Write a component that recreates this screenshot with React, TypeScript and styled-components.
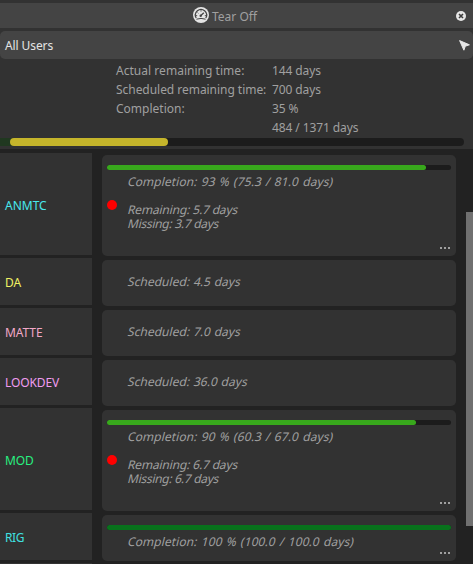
import React from 'react';
import styled, { createGlobalStyle } from 'styled-components';

const GlobalStyle = createGlobalStyle`
  * { box-sizing: border-box; }
  html, body { margin: 0; background: #323232; overflow: hidden; }
`;

const Panel = styled.div`
  width: 473px;
  height: 564px;
  padding-top: 3px;
  display: flex;
  flex-direction: column;
  overflow: hidden;
  background: #323232;
  color: #a0a0a0;
  font: 12px/19px 'Noto Sans', sans-serif;
  white-space: pre;
`;

const TitleBar = styled.header`
  height: 25px;
  flex: none;
  display: grid;
  grid-template-columns: 193px 1fr 10px;
  align-items: center;
  padding-right: 7px;
  background: #444;
`;

const TearOff = styled.button`
  grid-column: 2;
  display: flex;
  align-items: center;
  gap: 3px;
  padding: 0;
  border: 0;
  background: none;
  color: #a0a0a0;
  font: inherit;

  svg { margin-bottom: 1px; }
  span { padding-top: 2px; }
`;

const IconButton = styled.button`
  display: flex;
  padding: 0;
  border: 0;
  background: none;
`;

const UserBar = styled.div`
  height: 28px;
  flex: none;
  margin-top: 3px;
  padding: 1px 3px 0 5px;
  display: flex;
  align-items: center;
  justify-content: space-between;
  border-radius: 5px;
  background: #444;
  color: #e4e4e4;
  letter-spacing: -0.1px;
`;

const Summary = styled.dl`
  height: 79px;
  flex: none;
  margin: 0;
  padding: 2px 0 0 116px;
  display: grid;
  grid-template-columns: 156px 1fr;
  grid-auto-rows: 19px;
  align-content: start;

  dt, dd { margin: 0; }
  dd { grid-column: 2; letter-spacing: -0.1px; }
`;

const SummaryTerm = styled.dt<{ $spacing: number }>`
  letter-spacing: ${p => p.$spacing}px;
`;

const TotalTrack = styled.div`
  height: 8px;
  width: 464px;
  flex: none;
  padding-left: 10px;
  border-radius: 0 4px 4px 0;
  background: linear-gradient(90deg, #203820 14px, #1c1c1c 14px);
`;

const TotalFill = styled.div`
  width: 158px;
  height: 8px;
  border-radius: 4px;
  background: #c5b52b;
`;

const List = styled.main`
  flex: 1;
  min-height: 0;
  margin-top: 3px;
  display: grid;
  grid-template-columns: 92px 354px 7px;
  column-gap: 10px;
  background: #222;
`;

const Column = styled.div<{ $top: number; $gap: number }>`
  padding-top: ${p => p.$top}px;
  display: flex;
  flex-direction: column;
  gap: ${p => p.$gap}px;
  height: 415px;
  overflow: hidden;
`;

const Department = styled.div<{ $tall: boolean; $color: string; $spacing: number }>`
  height: ${p => (p.$tall ? 102 : 47)}px;
  flex: none;
  padding: 2px 0 0 5px;
  display: flex;
  align-items: center;
  background: #323232;
  color: ${p => p.$color};
  letter-spacing: ${p => p.$spacing}px;
`;

const Card = styled.section<{ $tall: boolean }>`
  position: relative;
  height: ${p => (p.$tall ? 101 : 46)}px;
  flex: none;
  padding: 10px 5px 0;
  border-radius: 5px;
  background: #323232;
`;

const Track = styled.div`
  height: 5px;
  border-radius: 3px;
  background: #1c1c1c;
`;

const Fill = styled.div<{ $width: number; $color: string }>`
  width: ${p => p.$width}px;
  height: 5px;
  border-radius: 3px;
  background: ${p => p.$color};
`;

const Details = styled.div`
  padding: 5px 0 0 20px;
  line-height: 14px;
`;

type Fit = 'completion' | 'remaining' | 'missing' | 'scheduled';

const tracking: Record<Fit, [number, number]> = {
  completion: [0.08, 1],
  remaining: [-0.16, 0],
  missing: [-0.28, 0],
  scheduled: [0.03, 0.6],
};

const DetailLine = styled.div<{ $fit: Fit }>`
  height: 14px;
  letter-spacing: ${p => tracking[p.$fit][0]}px;
  word-spacing: ${p => tracking[p.$fit][1]}px;
  transform: skewX(-14deg);
  transform-origin: 0 80%;
`;

const Alert = styled.i`
  position: absolute;
  left: 5px;
  top: 45px;
  width: 10px;
  height: 10px;
  border-radius: 50%;
  background: #f00;
`;

const More = styled.div`
  position: absolute;
  right: 6px;
  bottom: 7px;
  display: flex;
  gap: 2px;

  i { width: 2px; height: 2px; background: #a0a0a0; }
`;

const ScrollThumb = styled.div`
  height: 314px;
  margin-top: 63px;
  background: #707070;
`;

const GaugeIcon = () => (
  <svg width="16" height="16" viewBox="0 0 16 16">
    <circle cx="8" cy="8" r="8" fill="#e4e4e4" />
    <path d="M3.2 11A5.6 5.6 0 1 1 12.8 11" fill="none" stroke="#444" strokeWidth="1.3" />
    <path d="M4.6 5.6L5.4 6.3M8 3.2V4.6M3 8.6H4.2M11.8 8.6H13" stroke="#444" strokeWidth=".9" />
    <path d="M3.4 12.2Q8 10.6 12.6 12.2" fill="none" stroke="#444" strokeWidth="1" />
    <path d="M7.6 8.8L10.8 5.8" stroke="#444" strokeWidth="1.3" />
    <circle cx="7.7" cy="8.8" r="1.2" fill="#444" />
  </svg>
);

const CloseIcon = () => (
  <svg width="10" height="10" viewBox="0 0 10 10">
    <circle cx="5" cy="5" r="5" fill="#e6e6e6" />
    <path d="M3 3L7 7M7 3L3 7" stroke="#3c3c3c" strokeWidth="1.6" />
  </svg>
);

const PointerIcon = () => (
  <svg width="11" height="11" viewBox="0 0 11 11">
    <path d="M.6.6L10.4 4.8L6.3 6.2L4.9 10.2Z" fill="#e6e6e6" stroke="#e6e6e6" strokeWidth="1" strokeLinejoin="round" />
  </svg>
);

type Dept = {
  name: string;
  color: string;
  spacing: number;
  bar?: { width: number; color: string };
  late?: boolean;
  lines: [Fit, string][];
};

const departments: Dept[] = [
  { name: 'ANMTC', color: '#48e8ee', spacing: 0, bar: { width: 319, color: '#38a81c' }, late: true,
    lines: [['completion', 'Completion: 93 % (75.3 / 81.0 days)'], ['completion', ''],
      ['remaining', 'Remaining: 5.7 days'], ['missing', 'Missing: 3.7 days']] },
  { name: 'DA', color: '#f2f264', spacing: -0.1, lines: [['scheduled', 'Scheduled: 4.5 days']] },
  { name: 'MATTE', color: '#f2a8c8', spacing: -0.1, lines: [['scheduled', 'Scheduled: 7.0 days']] },
  { name: 'LOOKDEV', color: '#f09cf0', spacing: -0.1, lines: [['scheduled', 'Scheduled: 36.0 days']] },
  { name: 'MOD', color: '#28f080', spacing: -0.1, bar: { width: 309, color: '#38a81c' }, late: true,
    lines: [['completion', 'Completion: 90 % (60.3 / 67.0 days)'], ['completion', ''],
      ['remaining', 'Remaining: 6.7 days'], ['missing', 'Missing: 6.7 days']] },
  { name: 'RIG', color: '#40e0e0', spacing: -0.4, bar: { width: 344, color: '#08721c' },
    lines: [['completion', 'Completion: 100 % (100.0 / 100.0 days)']] },
];

export default function App() {
  return (
    <Panel>
      <GlobalStyle />
      <TitleBar>
        <TearOff><GaugeIcon /><span>Tear Off</span></TearOff>
        <IconButton aria-label="Close"><CloseIcon /></IconButton>
      </TitleBar>
      <UserBar>
        <span>All Users</span>
        <IconButton aria-label="Select"><PointerIcon /></IconButton>
      </UserBar>
      <Summary>
        <SummaryTerm $spacing={0.03}>Actual remaining time:</SummaryTerm><dd>144 days</dd>
        <SummaryTerm $spacing={-0.04}>Scheduled remaining time:</SummaryTerm><dd>700 days</dd>
        <SummaryTerm $spacing={0}>Completion:</SummaryTerm><dd>35 %</dd>
        <dd>484 / 1371 days</dd>
      </Summary>
      <TotalTrack><TotalFill /></TotalTrack>
      <List>
        <Column $top={4} $gap={3}>
          {departments.map(d => (
            <Department key={d.name} $tall={!!d.late} $color={d.color} $spacing={d.spacing}>{d.name}</Department>
          ))}
          <Department $tall={false} $color="#323232" $spacing={0} />
        </Column>
        <Column $top={6} $gap={4}>
          {departments.map(d => (
            <Card key={d.name} $tall={!!d.late}>
              {d.bar && <Track><Fill $width={d.bar.width} $color={d.bar.color} /></Track>}
              {d.late && <Alert />}
              <Details>
                {d.lines.map(([fit, text], i) => <DetailLine key={i} $fit={fit}>{text}</DetailLine>)}
              </Details>
              {d.bar && <More><i /><i /><i /></More>}
            </Card>
          ))}
        </Column>
        <ScrollThumb />
      </List>
    </Panel>
  );
}
